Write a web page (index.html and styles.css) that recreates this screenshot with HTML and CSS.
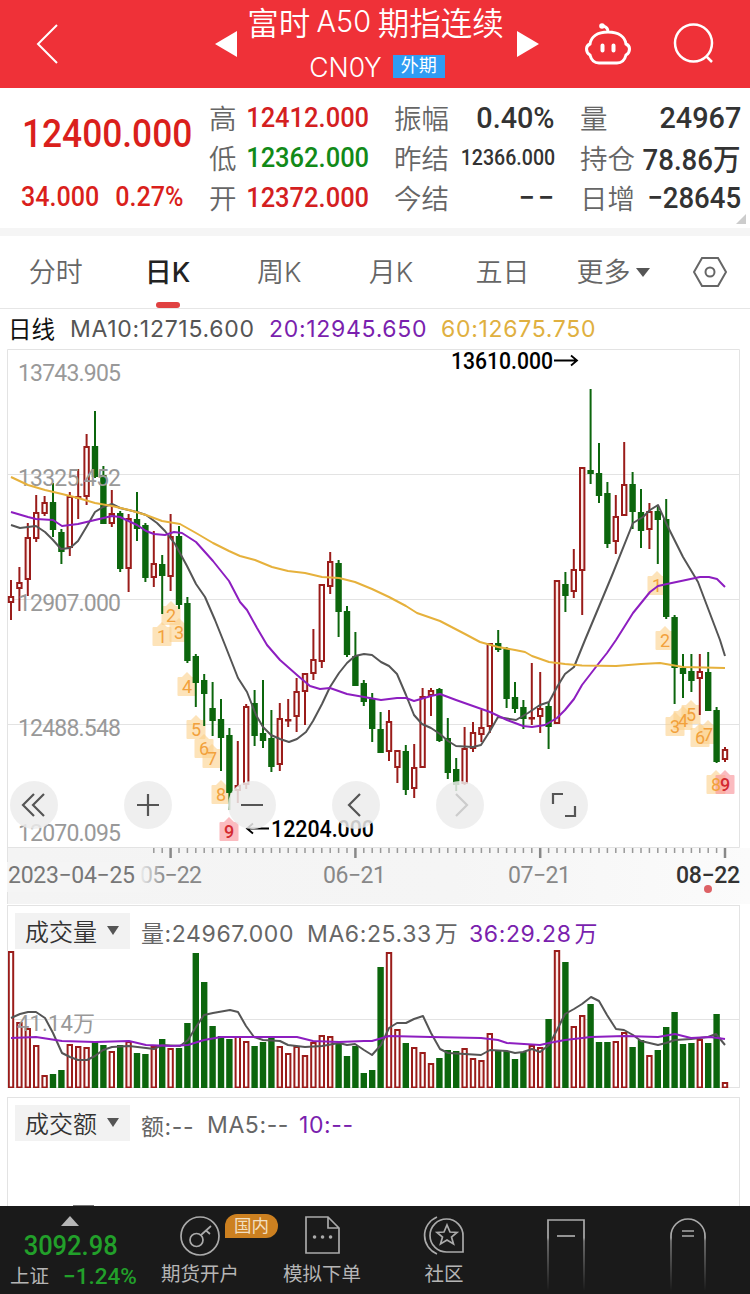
FILE: index.html
```html
<!DOCTYPE html>
<html lang="zh-CN">
<head>
<meta charset="utf-8">
<title>富时A50期指连续</title>
<link rel="stylesheet" href="styles.css">
</head>
<body>
<header class="topbar">
  <svg class="back" width="24" height="42" viewBox="0 0 24 42"><path d="M21 2 2 21 21 40"/></svg>
  <svg class="prev" width="22" height="26" viewBox="0 0 22 26"><path d="M22 0V26L0 13z"/></svg>
  <div class="heading">
    <div class="title"><span>富时</span><span class="latin">A50</span><span>期指连续</span></div>
    <div class="subtitle"><span class="code">CN0Y</span><span class="badge">外期</span></div>
  </div>
  <svg class="next" width="22" height="26" viewBox="0 0 22 26"><path d="M0 0V26L22 13z"/></svg>
  <svg class="robot" width="48" height="44" viewBox="0 0 48 44"><path d="M24 10C35 10 41 15 42 22Q45.500 23.500 45.500 27 45.500 31 42 33 40 41 33 41H15Q8 41 6 33 2.500 31 2.500 27 2.500 23.500 6 22C7 15 13 10 24 10zM24 10Q24 5 19 4"/><circle cx="18" cy="4" r="2.800"/><path class="eyes" d="M18.500 23.500v5M29.500 23.500v5"/></svg>
  <svg class="search" width="42" height="42" viewBox="0 0 42 42"><circle cx="20.500" cy="20" r="18.500"/><path d="M33 33 39 39"/></svg>
</header>

<section class="quote">
  <div class="last">
    <div class="price">12400.000</div>
    <div class="change"><span>34.000</span><span>0.27%</span></div>
  </div>
  <dl class="stats first">
    <div><dt>高</dt><dd class="up">12412.000</dd></div>
    <div><dt>低</dt><dd class="down">12362.000</dd></div>
    <div><dt>开</dt><dd class="up">12372.000</dd></div>
  </dl>
  <dl class="stats second">
    <div><dt>振幅</dt><dd class="large">0.40%</dd></div>
    <div><dt>昨结</dt><dd class="small">12366.000</dd></div>
    <div><dt>今结</dt><dd class="large dashes">−−</dd></div>
  </dl>
  <dl class="stats third">
    <div><dt>量</dt><dd class="large">24967</dd></div>
    <div><dt>持仓</dt><dd class="large tight">78.86万</dd></div>
    <div><dt>日增</dt><dd class="large tight">−28645</dd></div>
  </dl>
  <i class="corner"></i>
</section>

<nav class="tabs">
  <span>分时</span><span class="active">日K</span><span>周K</span><span>月K</span><span>五日</span>
  <span class="more">更多<i class="caret"></i></span>
  <svg width="34" height="32" viewBox="0 0 34 32"><path d="M9 2H25L33 16 25 30H9L1 16z"/><circle cx="17" cy="16" r="4.500"/></svg>
</nav>

<div class="legend">
  <span class="name">日线</span><span class="ma10">MA10:12715.600</span><span class="purple">20:12945.650</span><span class="gold">60:12675.750</span>
</div>

<svg class="kline" width="750" height="556" viewBox="0 349 750 556">
  <defs>
    <linearGradient id="axis-fade"><stop offset="0" stop-color="#f5f5f5"/><stop offset=".83" stop-color="#f5f5f5"/><stop offset="1" stop-color="#f5f5f5" stop-opacity="0"/></linearGradient>
    <linearGradient id="axis-bg"><stop offset="0" stop-color="#f4f4f4"/><stop offset=".6" stop-color="#f5f5f5"/><stop offset="1" stop-color="#fbfbfb"/></linearGradient>
  </defs>
  <rect x="7" y="848" width="743" height="56" fill="url(#axis-bg)"/>
  <path class="grid" d="M7.500 904V349.500H739.500V847.500H7.500M8 474.500H739M8 599.500H739M8 724.500H739"/>
  <g id="tags"></g>
  <g id="candles"></g>
  <g class="scale">
    <text x="18" y="381" textLength="103">13743.905</text>
    <text x="18" y="486" textLength="103">13325.452</text>
    <text x="18" y="611" textLength="103">12907.000</text>
    <text x="18" y="736" textLength="103">12488.548</text>
    <text x="18" y="841" textLength="103">12070.095</text>
  </g>
  <polyline class="line gray" points="11,525 20,528 36,526 45,532 53,540 61,549 70,548 78,541 87,526 95,512 103,507 112,504 120,508 137,512 146,515 157,523 165,531 175,544 187,566 196,584 205,597 215,620 225,645 238,678 247,692 256,715 263,727 271,735 280,739 289,742 297,739 306,732 313,721 322,704 330,687 339,673 347,663 355,656 364,654 372,655 381,662 389,666 397,674 406,695 414,715 422,724 431,728 440,734 448,741 456,746 473,747 481,745 490,731 498,717 507,718.5 516,720 528,713 540,705 549,702 557,687 565,674 574,667 585,640 603,597 613,573 633,523 643,517 650,510 658,505 667,525 683,557 698,582 720,640 725,656"/>
  <polyline class="line violet" points="11,512 28,517 36,519 53,520 62,526 78,524 95,520 112,516 120,517 137,525 146,531 154,534 165,535 174,532 182,533 196,542 213,561 229,581 240,602 247,610 257,628 267,645 280,660 297,675 310,686 320,689 330,688 347,694 364,697 381,700 397,698 406,698 414,701 431,696 440,694 456,700 473,706 490,712 507,720 523,726 532,727 545,725 557,718 565,710 574,699 582,685 599,663 607,653 616,640 633,613 650,592 658,586 667,584 700,577 709,577 717,579 725,587"/>
  <polyline class="line amber" points="11,477 28,485 45,490 62,494 78,498 95,503 112,506 129,510 146,515 162,521 180,524 196,533 213,543 229,551 240,556 255,560 272,567 288,571 305,573 322,577 339,578 355,582 372,589 389,597 406,606 417,613 440,621 465,634 480,642 498,647 515,650 525,652 532,656 549,662 565,664 582,665.5 616,666 641,664 660,663 683,667 725,668"/>
  <g class="mark">
    <text x="451" y="369" textLength="102" lengthAdjust="spacingAndGlyphs">13610.000</text>
    <path d="M554 360.500H577M571 355.500 577 360.500 571 365.500"/>
    <text x="271" y="837" textLength="103" lengthAdjust="spacingAndGlyphs">12204.000</text>
    <path d="M269 828.500H247M253 823.500 247 828.500 253 833.500"/>
  </g>
  <g id="ticks"></g>
  <g class="dates">
    <text x="140" y="883" textLength="62">05−22</text>
    <rect x="7" y="862" width="158" height="30" fill="url(#axis-fade)"/>
    <text class="mid" x="8" y="883" textLength="127">2023−04−25</text>
    <text x="323" y="883" textLength="63">06−21</text>
    <text x="508" y="883" textLength="63">07−21</text>
    <text class="now" x="676" y="883" textLength="64">08−22</text>
    <circle cx="708" cy="889" r="4" fill="#dd6165"/>
  </g>
  <g class="buttons">
    <circle cx="34" cy="805" r="24"/><circle cx="148" cy="805" r="24"/><circle cx="252" cy="805" r="24"/><circle cx="356" cy="805" r="24"/><circle cx="460" cy="805" r="24"/><circle cx="564" cy="805" r="24"/>
    <path d="M34 794 23 805 34 816M44 794 33 805 44 816M137 805H159M148 794V816M241 805H263M360 794 349 805 360 816M553 804V794H563M575 806V816H565"/>
    <path class="off" d="M456 794 467 805 456 816"/>
  </g>
</svg>

<section class="panel volume">
  <div class="row"><span class="picker">成交量<i class="caret"></i></span><span class="v1">量:24967.000</span><span class="v2">MA6:25.33<b>万</b></span><span class="v3 purple">36:29.28<b>万</b></span></div>
  <svg width="731" height="139" viewBox="8 949 731 139">
    <path class="grid" d="M8 1019.500H739M8 1087.500H739"/>
    <g id="bars"></g>
    <text class="cap" x="17" y="1031" textLength="78">41.14万</text>
    <polyline class="line gray" points="11,1018 20,1014 28,1012 36,1012 45,1018 53,1033 62,1053 70,1057 78,1060 87,1060 95,1056 103,1050 112,1047 129,1046 146,1048 154,1049 162,1045 180,1046 188,1040 196,1027 204,1015 213,1013 230,1010 238,1012 246,1026 254,1037 263,1040 280,1041 288,1045 305,1047 322,1046 339,1043 347,1045 355,1044 364,1050 372,1055 381,1045 389,1028 397,1023 406,1023 414,1019 423,1016 431,1033 440,1049 448,1053 465,1054 481,1055 490,1050 507,1051 515,1053 523,1052 532,1049 540,1052 549,1045 557,1030 565,1014 574,1009 582,1004 591,997 599,1001 607,1015 616,1029 624,1030 633,1035 641,1041 658,1045 666,1043 675,1040 691,1039 708,1037 716,1034 725,1045"/>
    <polyline class="line violet" points="11,1038 36,1037 62,1041 95,1042 129,1041 146,1045 171,1046 188,1045 204,1040 221,1037 250,1037 297,1037 313,1041 339,1042 364,1041 372,1041 389,1036 431,1037 481,1038 498,1040 507,1043 540,1045 549,1043 565,1040 591,1037 625,1036 658,1037 675,1034 691,1038 710,1037 725,1039"/>
  </svg>
</section>

<section class="panel amount">
  <div class="row"><span class="picker">成交额<i class="caret"></i></span><span class="a1">额:--</span><span class="a2">MA5:--</span><span class="purple">10:--</span></div>
  <i class="handle"></i>
</section>

<footer class="bottombar">
  <div class="index">
    <i class="up-arrow"></i>
    <div class="value">3092.98</div>
    <div class="detail"><span>上证</span><span class="pct">−1.24%</span></div>
  </div>
  <div class="item">
    <svg width="42" height="42" viewBox="0 0 42 42"><circle cx="21" cy="21" r="19"/><circle cx="17.500" cy="25" r="6.500"/><path d="M22 20 32 11M27 15.500 31 19"/></svg>
    <span>期货开户</span><em>国内</em>
  </div>
  <div class="item">
    <svg width="42" height="42" viewBox="0 0 42 42"><path d="M5 2H27L38 13V38H5zM27 2V13H38"/><path class="dots" d="M13.500 22h.1M21.500 22h.1M29.500 22h.1"/></svg>
    <span>模拟下单</span>
  </div>
  <div class="item">
    <svg width="42" height="42" viewBox="0 0 42 42"><path d="M40 37H24A16.500 16.500 0 1 1 40 21zM14 2A20 20 0 0 0 14 39"/><path d="M24 10 27 17 34 17.500 28.500 22 30.500 29 24 25 17.500 29 19.500 22 14 17.500 21 17z"/></svg>
    <span>社区</span>
  </div>
  <div class="item tall">
    <svg width="42" height="76" viewBox="0 0 42 76"><defs><linearGradient id="fade" gradientUnits="userSpaceOnUse" x1="0" y1="0" x2="0" y2="76"><stop offset=".3" stop-color="#aaa"/><stop offset=".34" stop-color="#777"/><stop offset="1" stop-color="#1a1a1a"/></linearGradient></defs><path stroke="url(#fade)" d="M3 76V5H39V76"/><path d="M12 21H30"/></svg>
  </div>
  <div class="item tall">
    <svg width="42" height="76" viewBox="0 0 42 76"><path stroke="url(#fade)" d="M4 76V21A17 17 0 0 1 38 21V76"/><path d="M15 16H27M15 21H27"/></svg>
  </div>
</footer>
<script src="chart.js"></script>
</body>
</html>
```

FILE: styles.css
```css
* { box-sizing: border-box; }
body {
  margin: 0;
  width: 750px;
  height: 1294px;
  overflow: hidden;
  background: #fff;
  color: #333;
  font-family: Inter, "Noto Sans CJK SC", sans-serif;
  font-weight: 400;
}
svg { display: block; flex: none; fill: none; }
i, em { font-style: normal; }

.topbar {
  display: flex;
  align-items: center;
  height: 88px;
  background: #ef3138;
  color: #fff;
}
.topbar svg { stroke: #fff; stroke-width: 2.5; }
.topbar .back { margin-left: 36px; stroke-width: 2; }
.topbar .prev { margin-left: 155px; fill: #fff; stroke: none; }
.topbar .next { fill: #fff; stroke: none; }
.topbar .robot { margin-left: 45px; stroke-width: 3; }
.robot circle { fill: #fff; stroke: none; }
.topbar .robot .eyes { stroke-width: 4; stroke-linecap: round; }
.topbar .search { margin-left: 41px; }
.heading { width: 280px; height: 88px; }
.title { display: flex; justify-content: center; align-items: center; height: 42px; font-size: 31.5px; font-weight: 350; }
.title .latin { font-size: 29.5px; margin: 0 6px; transform: scaleX(.98); }
.title span:first-child { margin-left: -3px; }
.subtitle { display: flex; justify-content: center; align-items: center; gap: 11px; height: 46px; padding-top: 3px; }
.code { font-size: 26.5px; font-weight: 350; }
.badge { width: 52px; height: 23px; line-height: 22px; background: #2f9cf3; font-size: 18px; text-align: center; }

.quote {
  position: relative;
  display: flex;
  height: 148px;
  padding-top: 9px;
  border-bottom: 8px solid #f5f5f5;
  font-family: Roboto, "Noto Sans CJK SC", sans-serif;
  font-weight: 500;
}
.last { width: 209px; padding-left: 22px; color: #da1f1c; }
.price { height: 72px; line-height: 74px; font-size: 39px; transform: scaleX(.905); transform-origin: left; white-space: nowrap; }
.change { display: flex; gap: 17px; line-height: 56px; font-size: 27px; margin-left: -1px; transform: scaleX(.93); transform-origin: left; white-space: nowrap; }
.stats { margin: 0; }
.stats div { display: flex; justify-content: space-between; align-items: center; height: 40px; }
.stats dt { flex: none; color: #666; font-size: 27.5px; font-weight: 350; }
.stats dd { flex: none; margin: 0 0 0 -20px; font-size: 28px; white-space: nowrap; transform: scaleX(.91); transform-origin: right; }
.stats .large { font-size: 30px; transform: scaleX(.96); }
.stats .tight { transform: scaleX(.92); }
.stats .dashes { letter-spacing: 3px; margin-right: -2px; }
.stats .small { font-size: 22px; transform: scaleX(.89); }
.up { color: #d4201f; }
.down { color: #128a18; }
.first { width: 160px; margin-right: 25px; }
.second { width: 161px; margin-right: 25px; }
.third { width: 161px; }
.corner { position: absolute; right: 4px; bottom: 4px; border: 5px solid #ccc; border-top-color: transparent; border-left-color: transparent; }

.tabs { display: flex; height: 73px; border-bottom: 1px solid #e6e6e6; color: #666; font-size: 27px; font-weight: 350; line-height: 73px; text-align: center; }
.tabs > span { width: 111.7px; }
.tabs .active { position: relative; color: #222; font-weight: 500; }
.active::after { content: ""; position: absolute; left: 44px; bottom: 0; width: 24px; height: 6px; border-radius: 3px; background: #e04141; }
.tabs .more { width: 119px; display: flex; align-items: center; gap: 6px; margin-left: 18px; }
.tabs svg { stroke: #666; stroke-width: 2; margin-top: 20px; margin-left: -2px; }
.caret { border: 7px solid transparent; border-top: 9px solid #555; border-bottom: 0; }

.legend { display: flex; align-items: center; height: 40px; padding-left: 8px; font-size: 23px; color: #555; white-space: nowrap; }
.legend span { letter-spacing: .7px; padding-bottom: 1px; }
.legend .name { width: 62px; color: #111; font-size: 23.5px; letter-spacing: 0; padding-bottom: 2px; }
.legend .ma10 { width: 199px; }
.legend .purple { width: 172px; }
.purple { color: #7a1fae; }
.gold { color: #e0b040; }

.kline text { font-family: Roboto, sans-serif; font-size: 23px; }
.grid { stroke: #e3e3e3; stroke-width: 1; }
.line { stroke-width: 2; stroke-linejoin: round; }
.gray { stroke: #555; }
.violet { stroke: #8d1ec0; }
.amber { stroke: #e6b13c; }
.scale text, .cap { fill: #999; }
.mark text { fill: #000; font-weight: 500; }
.mark path { stroke: #000; stroke-width: 1.8; }
.dates text { fill: #888; }
.kline .dates .mid { fill: #777; }
.kline .dates .now { fill: #333; font-weight: 500; }
.buttons circle { fill: #ececec; fill-opacity: .85; }
.buttons path { stroke: #555; stroke-width: 2.2; }
.buttons .off { stroke: #ccc; }
.candle { stroke-width: 2; }
.rise { stroke: #9a1c1a; fill: #fff; }
.rise.soft { fill: #fce9e6; }
.fall { stroke: #0c660d; fill: #0c660d; }
.tag rect, .tag path { fill: #fcd08a; fill-opacity: .6; }
.kline .tag text { fill: #f2a13c; font-size: 18px; text-anchor: middle; }
.tag.hot rect, .tag.hot path { fill: #f98d95; }
.kline .tag.hot text { fill: #d42a30; font-weight: 500; }
#ticks path { stroke: #999; stroke-width: 1.5; }
#ticks .major { stroke: #888; stroke-width: 2.5; }

.panel { width: 733px; margin-left: 7px; border: 1px solid #e3e3e3; }
.volume { height: 183px; border-bottom: 0; }
.row { display: flex; align-items: center; height: 43px; padding: 9px 0 0 7px; font-size: 23px; color: #666; white-space: nowrap; }
.row span { letter-spacing: .6px; }
.row b { font-weight: 400; margin-left: 3px; }
.row .picker { display: flex; align-items: center; width: 115px; height: 36px; margin: -2px 11px 0 0; padding: 0 0 2px 10px; gap: 10px; background: #f2f2f2; color: #333; font-size: 24px; font-weight: 350; letter-spacing: 0; }
.picker .caret { border-width: 9px 6.5px 0; }
.v1 { width: 166px; }
.v2 { width: 162px; }
.cap { font-family: Roboto, "Noto Sans CJK SC", sans-serif; font-size: 22px; }
.amount { height: 109px; margin-top: 9px; border-bottom: 0; }
.amount .row { padding-top: 11px; }
.amount .picker { margin-top: -4px; }
.a1 { width: 66px; }
.a2 { width: 92px; }
.handle { display: block; width: 21px; height: 1.5px; margin: 64px 0 0 65px; background: #777; }

.bottombar { position: relative; display: flex; height: 88px; background: #1a1a1a; color: #b5b5b5; font-size: 19.5px; }
.index { width: 139px; padding-left: 8px; display: flex; flex-direction: column; align-items: center; font-family: Roboto, "Noto Sans CJK SC", sans-serif; }
.up-arrow { margin: 10px 8px 0 0; border: 9px solid transparent; border-top: 0; border-bottom: 10px solid #b5b5b5; }
.value { height: 38px; line-height: 39px; margin-right: 5px; color: #22a02a; font-size: 28px; font-weight: 500; transform: scaleX(.91); }
.detail { display: flex; gap: 14px; line-height: 25px; }
.pct { color: #22a02a; font-size: 22.5px; font-weight: 500; }
.item { position: relative; width: 122px; padding-top: 9px; display: flex; flex-direction: column; align-items: center; }
.item svg { stroke: #aaa; stroke-width: 1.7; }
.item span { line-height: 34px; white-space: nowrap; }
.item .dots { stroke-width: 3.5; stroke-linecap: round; }
.item em { position: absolute; left: 86px; top: 8px; width: 53px; height: 24px; line-height: 23px; background: #cc8020; border-radius: 12px 12px 12px 0; color: #f2dfc0; font-size: 17.5px; text-align: center; }
```

FILE: chart.js
```js
const NS = 'http://www.w3.org/2000/svg';
const xAt = (i) => 11 + 8.4 * i;

function add(parent, name, attrs, text) {
  const el = document.createElementNS(NS, name);
  for (const key in attrs) el.setAttribute(key, attrs[key]);
  if (text !== undefined) el.textContent = text;
  parent.appendChild(el);
  return el;
}

// direction, high, low, body top, body bottom, volume bar top
const rows = `r 580 620 596 603 951|r 567 611 582 589 1022|r 523 596 537 580 1028|r 495 542 512 539 1045|r 496 516 502 514 1075
g 483 537 502 530 1074|g 529 564 532 552 1070|r 492 556 496 548 1044|r 469 519 496 498 1046|r 434 505 446 497 1047
g 411 478 446 477 1042|g 466 524 475 524 1045|r 490 527 513 524 1051|g 511 572 513 569 1045|r 514 592 518 569 1041
g 492 541 519 529 1053|g 523 582 525 578 1054|r 531 587 563 578 1046|g 555 614 564 576 1039|r 514 591 536 577 1048
g 526 609 536 605 1048|g 597 663 603 661 1023|g 654 707 656 683 953|g 674 726 680 694 982|g 682 736 708 721 1026
g 699 771 719 738 1036|g 728 810 735 793 1039|r 741 803 785 791 1036|r 704 789 706 785 1041|g 690 746 703 736 1046
g 680 748 733 741 1042|g 710 772 738 767 1037|r 703 771 718 765 1046|r 699 727 719 721 1053|r 678 732 691 717 1046
r 673 725 673 692 1055|r 629 680 659 674 1042|r 584 668 584 662 1035|r 552 594 561 587 1036|g 560 637 563 612 1044
g 606 657 611 655 1056|g 632 686 656 686 1046|g 680 706 683 702 1073|g 693 742 698 729 1070|g 712 753 729 753 967
r 710 761 721 752 952|r 750 783 750 768 1029|g 745 795 751 790 1043|r 744 798 767 789 1047|r 688 768 696 768 1052
r 688 716 690 696 1063|g 688 742 689 741 1058|g 718 779 738 773 1050|g 758 791 769 785 1051|r 727 785 748 784 1048
r 722 752 732 749 1058|r 710 742 727 735 1060|r 643 733 643 727 1033|g 630 652 643 650 1051|g 647 708 648 699 1051
g 682 713 697 709 1059|g 700 729 707 719 1052|r 663 725 717 719 1045|r 672 733 708 717 1047|g 702 749 706 727 1019
r 580 724 580 724 950|g 572 612 584 596 962|r 549 598 569 592 1026|r 467 615 467 571 1015|g 389 484 470 474 1004
g 443 503 473 496 1042|g 482 548 493 544 1042|r 495 554 516 542 1041|r 442 516 484 516 1032|g 472 529 484 512 1047
g 489 548 512 531 1040|r 503 549 511 530 1055|g 507 564 511 520 1050|g 499 619 519 617 1027|g 615 704 617 668 1012
g 654 698 668 674 1044|g 654 692 671 681 1043|r 654 715 671 679 1039|g 652 711 672 711 1043|g 707 763 710 762 1014
r 747 762 749 760 1082`.split(/[|\n]/).map((s) => s.trim().split(' '));

const candles = document.getElementById('candles');
const bars = document.getElementById('bars');
rows.forEach(([dir, high, low, top, bottom, vol], i) => {
  const x = xAt(i);
  const cls = dir === 'r' ? (i % 3 === 2 ? 'candle rise soft' : 'candle rise') : 'candle fall';
  add(candles, 'path', { class: cls, d: `M${x} ${high}V${low}` });
  add(candles, 'rect', { class: cls, x: x - 2.2, y: +top + 1, width: 4.4, height: Math.max(0.5, bottom - top - 2) });
  add(bars, 'rect', { class: cls, x: x - 2.2, y: +vol + 1, width: 4.4, height: 1086.5 - vol });
});

const tags = document.getElementById('tags');
const tagData = [[162, 636, 1], [171, 615, 2], [179, 632, 3], [187, 686, 4], [196, 729, 5], [204, 748, 6], [212, 758, 7], [221, 794, 8], [229, 831, 9],
  [657, 585, 1], [665, 640, 2], [675, 726, 3], [683, 720, 4], [691, 714, 5], [700, 737, 6], [708, 734, 7], [716, 784, 8], [725, 784, 9]];
tagData.forEach(([x, y, n]) => {
  const g = add(tags, 'g', { class: n === 9 ? 'tag hot' : 'tag' });
  add(g, 'rect', { x: x - 9.5, y: y - 9, width: 19, height: 19, rx: 1 });
  add(g, 'path', { d: `M${x - 5} ${y - 9}L${x} ${y - 14}L${x + 5} ${y - 9}z` });
});
tagData.forEach(([x, y, n]) => {
  const g = add(tags, 'g', { class: n === 9 ? 'tag hot' : 'tag' });
  add(g, 'text', { x, y: y + 7 }, n);
});

const ticks = document.getElementById('ticks');
for (let i = 17; i <= 85; i++) {
  const major = (i - 19) % 22 === 0;
  add(ticks, 'path', { class: major ? 'major' : 'minor', d: `M${xAt(i)} 848V${major ? 858 : 853}` });
}
```
